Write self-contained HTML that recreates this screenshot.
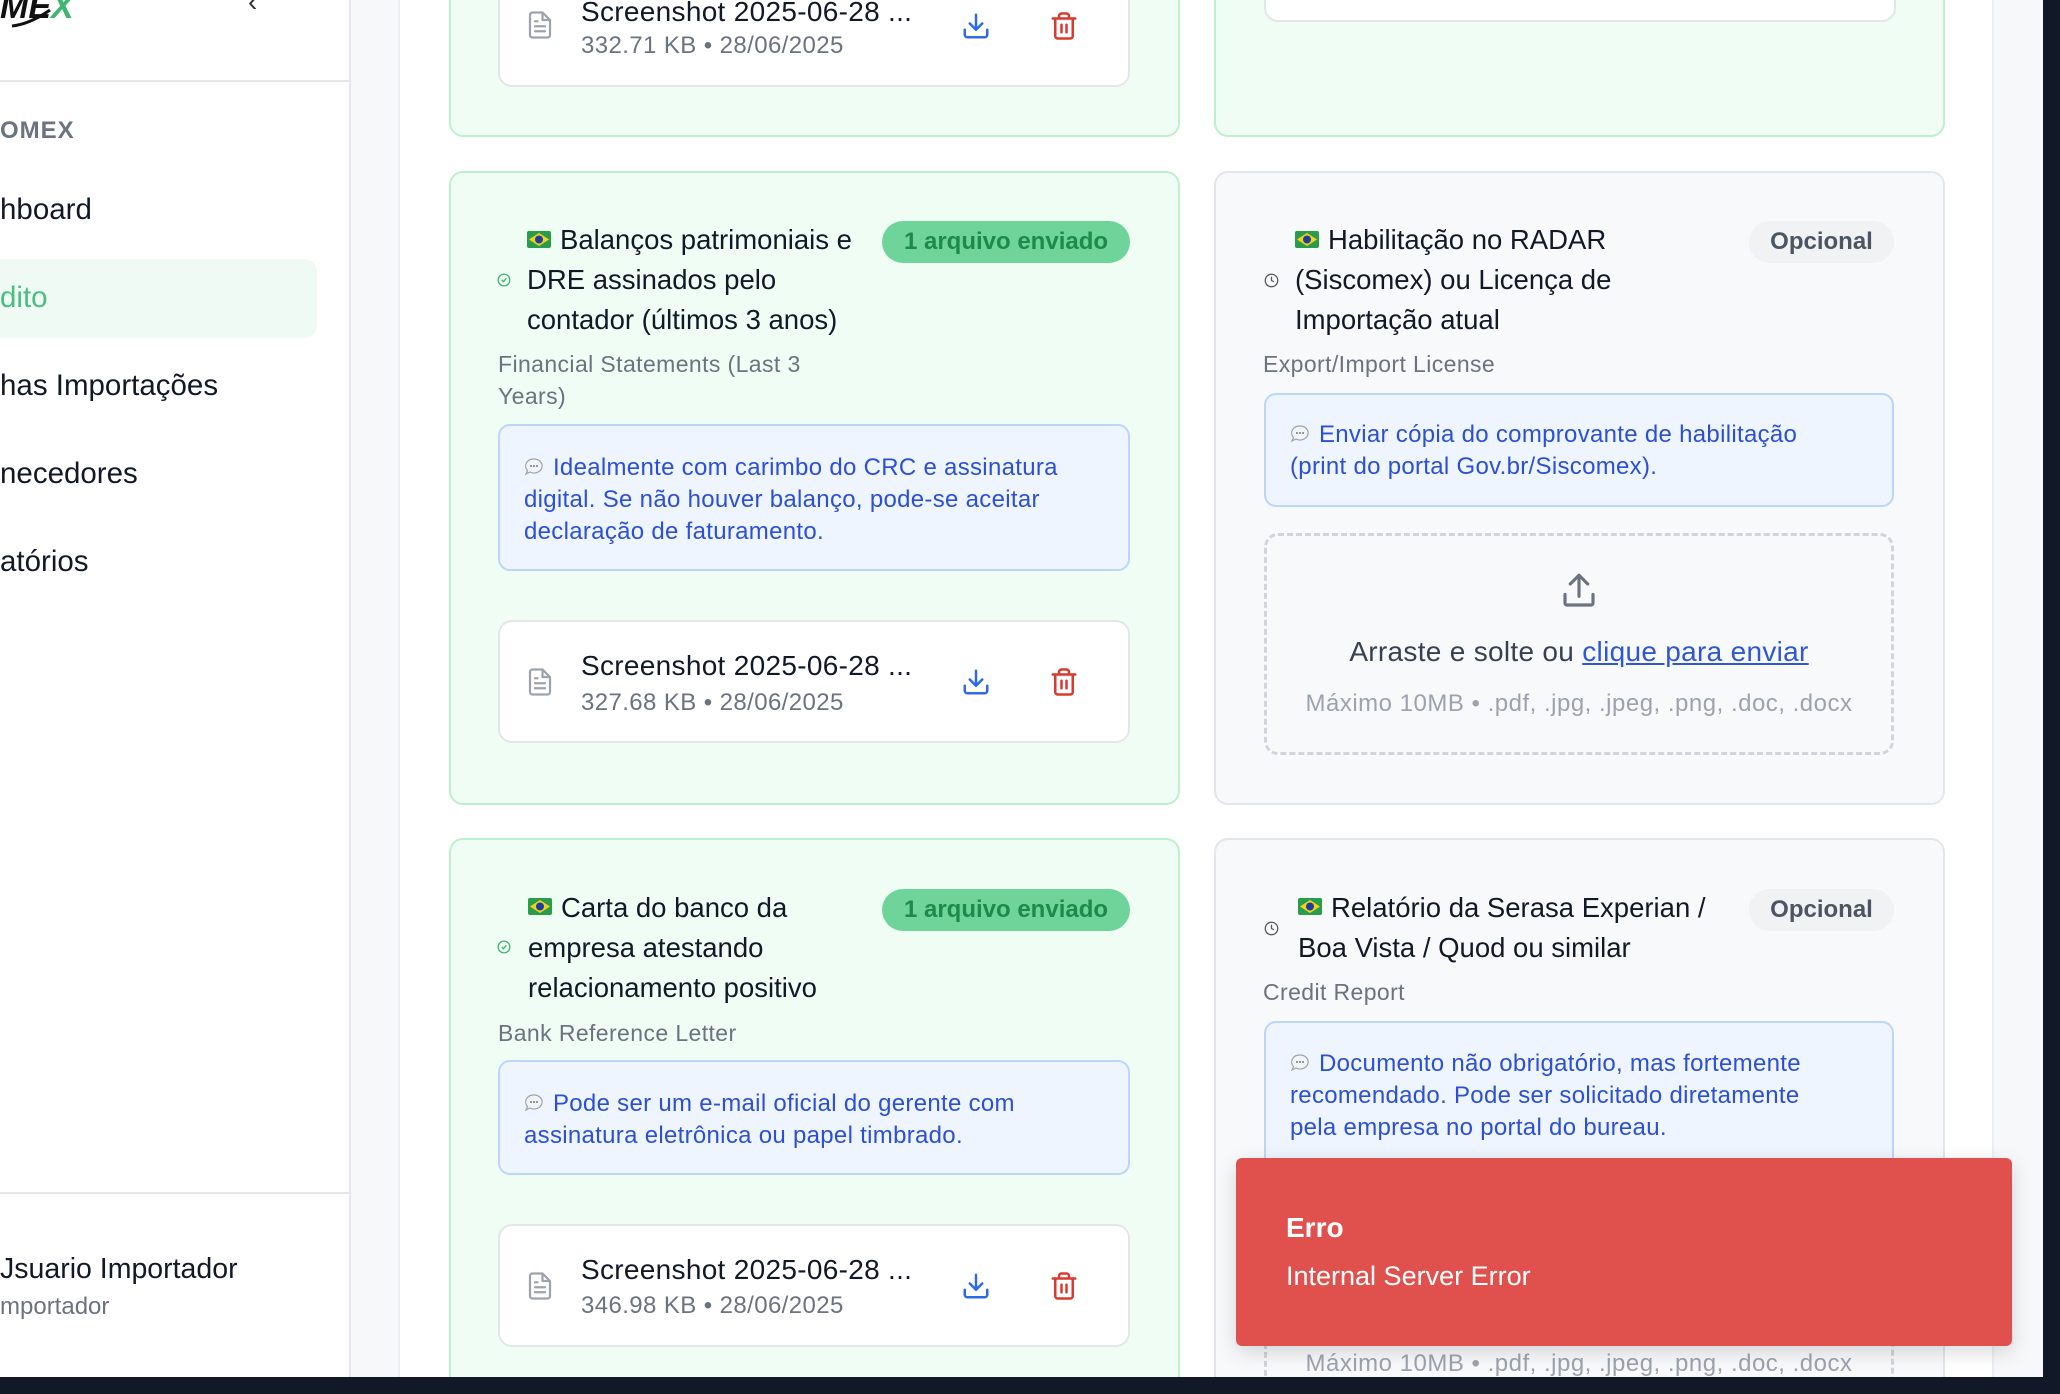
<!DOCTYPE html>
<html style="width:2060px;height:1394px;overflow:hidden"><head><meta charset="utf-8">
<style>
*{box-sizing:border-box;margin:0;padding:0}
body{width:2060px;height:1394px;overflow:hidden;background:#f7f8fa;font-family:"Liberation Sans","Noto Sans CJK JP",sans-serif;color:#111827}
#w{position:relative;width:2060px;height:1394px;overflow:hidden}
.a{position:absolute}
.side{left:0;top:0;width:351px;height:1394px;background:#fff;border-right:2px solid #e5e7eb}
.nav{left:0;font-size:29.5px;color:#111827;line-height:40px}
.main{left:398px;top:0;width:1596px;height:1394px;background:#fff;border-left:2px solid #eceef1;border-right:2px solid #eceef1}
.card{border-radius:14px;border:2px solid #bdf0cd;background:#f0fdf4}
.card.g{border-color:#e3e6ea;background:#f8f9fb}
.t{font-size:27.5px;line-height:40px;color:#111827}
.sub{font-size:23px;letter-spacing:0.4px;line-height:32px;color:#6b7280}
.note{border:2px solid #bcd6fb;background:#eef5fe;border-radius:12px;color:#2c4fd6;font-size:24px;letter-spacing:0.3px;line-height:32px;padding:0 24px;white-space:nowrap}
.file{background:#fff;border:2px solid #e3e6ea;border-radius:14px}
.fn{font-size:28px;letter-spacing:0.3px;color:#111827;line-height:34px}
.fm{font-size:24px;letter-spacing:0.4px;color:#6b7280;line-height:30px}
.badge{border-radius:22px;background:#6fd49a;color:#1e8a4a;font-size:24px;font-weight:bold;text-align:center;line-height:42px}
.opt{border-radius:22px;background:#f1f2f3;color:#4b5563;font-size:24px;font-weight:bold;text-align:center;line-height:42px}
.drop{border:3px dashed #d1d5db;border-radius:14px;text-align:center}
</style></head><body><div id="w">
<svg width="0" height="0" style="position:absolute"><defs>
<g id="flag"><rect x="0" y="0" width="24" height="17" rx="2" fill="#2a9d4b"/><path d="M12 2L22 8.5 12 15 2 8.5z" fill="#f5d020"/><circle cx="12" cy="8.5" r="4" fill="#1d3f9a"/></g>
<g id="bub"><path d="M10 2a8 7 0 1 1-4 13l-4 2 1.5-3.5A8 7 0 0 1 10 2z" fill="#f3f4f6" stroke="#9ca3af" stroke-width="1.2"/><circle cx="7" cy="9" r="0.9" fill="#555"/><circle cx="10" cy="9" r="0.9" fill="#555"/><circle cx="13" cy="9" r="0.9" fill="#555"/></g>
</defs></svg>

<div class="a side"></div>
<div class="a" style="left:0;top:-12px;font-size:34px;font-weight:bold;font-style:italic;color:#111">ME<span style="color:#3fb56f">X</span></div>
<svg class="a" style="left:10px;top:8px" width="60" height="20" viewBox="0 0 60 20"><path d="M2 18 Q20 16 40 2" fill="none" stroke="#111" stroke-width="3"/></svg>
<div class="a" style="left:248px;top:-14px;font-size:28px;color:#333">‹</div>
<div class="a" style="left:0;top:80px;width:351px;height:2px;background:#e5e7eb"></div>
<div class="a" style="left:0;top:117px;font-size:24px;font-weight:bold;color:#6b7280;letter-spacing:1px">OMEX</div>
<div class="a nav" style="top:190px">hboard</div>
<div class="a" style="left:0;top:259px;width:317px;height:79px;background:#f0faf5;border-radius:0 12px 12px 0"></div>
<div class="a nav" style="top:278px;color:#4cbd82">dito</div>
<div class="a nav" style="top:366px">has Importações</div>
<div class="a nav" style="top:454px">necedores</div>
<div class="a nav" style="top:542px">atórios</div>
<div class="a" style="left:0;top:1192px;width:351px;height:2px;background:#e5e7eb"></div>
<div class="a" style="left:0;top:1251px;font-size:28.5px;line-height:36px;color:#111827">Jsuario Importador</div>
<div class="a" style="left:0;top:1292px;font-size:24px;line-height:30px;color:#6b7280">mportador</div>

<div class="a main"></div>

<div class="a card" style="left:449px;top:-30px;width:731px;height:167px"></div>
<div class="a file" style="left:498px;top:-40px;width:632px;height:127px"></div>
<svg class="a" style="left:525px;top:9px" width="30" height="32" viewBox="0 0 24 24" fill="none" stroke="#9ca3af" stroke-width="1.8" stroke-linecap="round" stroke-linejoin="round"><path d="M14 2H6a2 2 0 0 0-2 2v16a2 2 0 0 0 2 2h12a2 2 0 0 0 2-2V8z M14 2v6h6 M16 13H8 M16 17H8 M10 9H8"/></svg>
<div class="a fn" style="left:581px;top:-5px">Screenshot 2025-06-28 ...</div>
<div class="a fm" style="left:581px;top:31px">332.71 KB • 28/06/2025</div>
<svg class="a" style="left:961px;top:11px" width="30" height="30" viewBox="0 0 24 24" fill="none" stroke="#2f6ae6" stroke-width="2" stroke-linecap="round" stroke-linejoin="round"><path d="M21 15v4a2 2 0 0 1-2 2H5a2 2 0 0 1-2-2v-4 M7 10l5 5 5-5 M12 15V3"/></svg>
<svg class="a" style="left:1049px;top:11px" width="30" height="30" viewBox="0 0 24 24" fill="none" stroke="#d93a30" stroke-width="2" stroke-linecap="round" stroke-linejoin="round"><path d="M3 6h18 M19 6v14a2 2 0 0 1-2 2H7a2 2 0 0 1-2-2V6 M8 6V4a2 2 0 0 1 2-2h4a2 2 0 0 1 2 2v2 M10 11v6 M14 11v6"/></svg>

<div class="a card" style="left:1214px;top:-30px;width:731px;height:167px"></div>
<div class="a file" style="left:1264px;top:-40px;width:632px;height:62px"></div>

<div class="a card" style="left:449px;top:171px;width:731px;height:634px"></div>
<svg class="a" style="left:497px;top:273px" width="14" height="14" viewBox="0 0 24 24" fill="none" stroke="#3fb56f" stroke-width="2.2"><circle cx="12" cy="12" r="10"/><path d="M8 12l3 3 5-6"/></svg>
<svg class="a" style="left:527px;top:231px" width="24" height="17"><use href="#flag"/></svg>
<div class="a t" style="left:527px;top:220px"><span style="padding-left:33px"></span>Balanços patrimoniais e<br>DRE assinados pelo<br>contador (últimos 3 anos)</div>
<div class="a badge" style="left:882px;top:221px;width:248px">1 arquivo enviado</div>
<div class="a sub" style="left:498px;top:348px">Financial Statements (Last 3<br>Years)</div>
<div class="a note" style="left:498px;top:424px;width:632px;height:147px;padding-top:26px"><svg width="22" height="20" style="vertical-align:-2px"><use href="#bub"/></svg> Idealmente com carimbo do CRC e assinatura<br>digital. Se não houver balanço, pode-se aceitar<br>declaração de faturamento.</div>
<div class="a file" style="left:498px;top:620px;width:632px;height:123px"></div>
<svg class="a" style="left:525px;top:666px" width="30" height="32" viewBox="0 0 24 24" fill="none" stroke="#9ca3af" stroke-width="1.8" stroke-linecap="round" stroke-linejoin="round"><path d="M14 2H6a2 2 0 0 0-2 2v16a2 2 0 0 0 2 2h12a2 2 0 0 0 2-2V8z M14 2v6h6 M16 13H8 M16 17H8 M10 9H8"/></svg>
<div class="a fn" style="left:581px;top:649px">Screenshot 2025-06-28 ...</div>
<div class="a fm" style="left:581px;top:688px">327.68 KB • 28/06/2025</div>
<svg class="a" style="left:961px;top:667px" width="30" height="30" viewBox="0 0 24 24" fill="none" stroke="#2f6ae6" stroke-width="2" stroke-linecap="round" stroke-linejoin="round"><path d="M21 15v4a2 2 0 0 1-2 2H5a2 2 0 0 1-2-2v-4 M7 10l5 5 5-5 M12 15V3"/></svg>
<svg class="a" style="left:1049px;top:667px" width="30" height="30" viewBox="0 0 24 24" fill="none" stroke="#d93a30" stroke-width="2" stroke-linecap="round" stroke-linejoin="round"><path d="M3 6h18 M19 6v14a2 2 0 0 1-2 2H7a2 2 0 0 1-2-2V6 M8 6V4a2 2 0 0 1 2-2h4a2 2 0 0 1 2 2v2 M10 11v6 M14 11v6"/></svg>

<div class="a card g" style="left:1214px;top:171px;width:731px;height:634px"></div>
<svg class="a" style="left:1264px;top:273px" width="15" height="15" viewBox="0 0 24 24" fill="none" stroke="#555" stroke-width="2"><circle cx="12" cy="12" r="10"/><path d="M12 6v6l4 2"/></svg>
<svg class="a" style="left:1295px;top:231px" width="24" height="17"><use href="#flag"/></svg>
<div class="a t" style="left:1295px;top:220px"><span style="padding-left:33px"></span>Habilitação no RADAR<br>(Siscomex) ou Licença de<br>Importação atual</div>
<div class="a opt" style="left:1749px;top:221px;width:145px">Opcional</div>
<div class="a sub" style="left:1263px;top:348px">Export/Import License</div>
<div class="a note" style="left:1264px;top:393px;width:630px;height:114px;padding-top:24px"><svg width="22" height="20" style="vertical-align:-2px"><use href="#bub"/></svg> Enviar cópia do comprovante de habilitação<br>(print do portal Gov.br/Siscomex).</div>
<div class="a drop" style="left:1264px;top:533px;width:630px;height:222px"></div>
<svg class="a" style="left:1558px;top:570px" width="42" height="42" viewBox="0 0 24 24" fill="none" stroke="#6b7280" stroke-width="1.8" stroke-linecap="round" stroke-linejoin="round"><path d="M4 14v5a1 1 0 0 0 1 1h14a1 1 0 0 0 1-1v-5 M7 8l5-5 5 5 M12 3v12"/></svg>
<div class="a" style="left:1264px;top:635px;width:630px;text-align:center;font-size:28px;letter-spacing:0.3px;line-height:34px;color:#374151">Arraste e solte ou <span style="color:#2f56d6;text-decoration:underline">clique para enviar</span></div>
<div class="a" style="left:1264px;top:689px;width:630px;text-align:center;font-size:24px;letter-spacing:0.5px;line-height:30px;color:#9ca3af">Máximo 10MB • .pdf, .jpg, .jpeg, .png, .doc, .docx</div>

<div class="a card" style="left:449px;top:838px;width:731px;height:600px"></div>
<svg class="a" style="left:497px;top:940px" width="14" height="14" viewBox="0 0 24 24" fill="none" stroke="#3fb56f" stroke-width="2.2"><circle cx="12" cy="12" r="10"/><path d="M8 12l3 3 5-6"/></svg>
<svg class="a" style="left:528px;top:898px" width="24" height="17"><use href="#flag"/></svg>
<div class="a t" style="left:528px;top:888px"><span style="padding-left:33px"></span>Carta do banco da<br>empresa atestando<br>relacionamento positivo</div>
<div class="a badge" style="left:882px;top:889px;width:248px">1 arquivo enviado</div>
<div class="a sub" style="left:498px;top:1017px">Bank Reference Letter</div>
<div class="a note" style="left:498px;top:1060px;width:632px;height:115px;padding-top:26px"><svg width="22" height="20" style="vertical-align:-2px"><use href="#bub"/></svg> Pode ser um e-mail oficial do gerente com<br>assinatura eletrônica ou papel timbrado.</div>
<div class="a file" style="left:498px;top:1224px;width:632px;height:123px"></div>
<svg class="a" style="left:525px;top:1270px" width="30" height="32" viewBox="0 0 24 24" fill="none" stroke="#9ca3af" stroke-width="1.8" stroke-linecap="round" stroke-linejoin="round"><path d="M14 2H6a2 2 0 0 0-2 2v16a2 2 0 0 0 2 2h12a2 2 0 0 0 2-2V8z M14 2v6h6 M16 13H8 M16 17H8 M10 9H8"/></svg>
<div class="a fn" style="left:581px;top:1253px">Screenshot 2025-06-28 ...</div>
<div class="a fm" style="left:581px;top:1291px">346.98 KB • 28/06/2025</div>
<svg class="a" style="left:961px;top:1271px" width="30" height="30" viewBox="0 0 24 24" fill="none" stroke="#2f6ae6" stroke-width="2" stroke-linecap="round" stroke-linejoin="round"><path d="M21 15v4a2 2 0 0 1-2 2H5a2 2 0 0 1-2-2v-4 M7 10l5 5 5-5 M12 15V3"/></svg>
<svg class="a" style="left:1049px;top:1271px" width="30" height="30" viewBox="0 0 24 24" fill="none" stroke="#d93a30" stroke-width="2" stroke-linecap="round" stroke-linejoin="round"><path d="M3 6h18 M19 6v14a2 2 0 0 1-2 2H7a2 2 0 0 1-2-2V6 M8 6V4a2 2 0 0 1 2-2h4a2 2 0 0 1 2 2v2 M10 11v6 M14 11v6"/></svg>

<div class="a card g" style="left:1214px;top:838px;width:731px;height:600px"></div>
<svg class="a" style="left:1264px;top:921px" width="15" height="15" viewBox="0 0 24 24" fill="none" stroke="#555" stroke-width="2"><circle cx="12" cy="12" r="10"/><path d="M12 6v6l4 2"/></svg>
<svg class="a" style="left:1298px;top:898px" width="24" height="17"><use href="#flag"/></svg>
<div class="a t" style="left:1298px;top:888px"><span style="padding-left:33px"></span>Relatório da Serasa Experian /<br>Boa Vista / Quod ou similar</div>
<div class="a opt" style="left:1749px;top:889px;width:145px">Opcional</div>
<div class="a sub" style="left:1263px;top:976px">Credit Report</div>
<div class="a note" style="left:1264px;top:1021px;width:630px;height:180px;padding-top:25px"><svg width="22" height="20" style="vertical-align:-2px"><use href="#bub"/></svg> Documento não obrigatório, mas fortemente<br>recomendado. Pode ser solicitado diretamente<br>pela empresa no portal do bureau.</div>
<div class="a drop" style="left:1264px;top:1220px;width:630px;height:200px"></div>
<div class="a" style="left:1264px;top:1349px;width:630px;text-align:center;font-size:24px;letter-spacing:0.5px;line-height:30px;color:#9ca3af">Máximo 10MB • .pdf, .jpg, .jpeg, .png, .doc, .docx</div>

<div class="a" style="left:1236px;top:1158px;width:776px;height:188px;background:#e0514d;border-radius:6px;box-shadow:0 6px 20px rgba(0,0,0,.15)"></div>
<div class="a" style="left:1286px;top:1211px;font-size:28px;font-weight:bold;color:#fff;line-height:34px">Erro</div>
<div class="a" style="left:1286px;top:1259px;font-size:27px;color:#fff;line-height:34px">Internal Server Error</div>

<div class="a" style="left:2043px;top:0;width:17px;height:1394px;background:#111827"></div>
<div class="a" style="left:0;top:1377px;width:2060px;height:17px;background:#111827"></div>
</div></body></html>
